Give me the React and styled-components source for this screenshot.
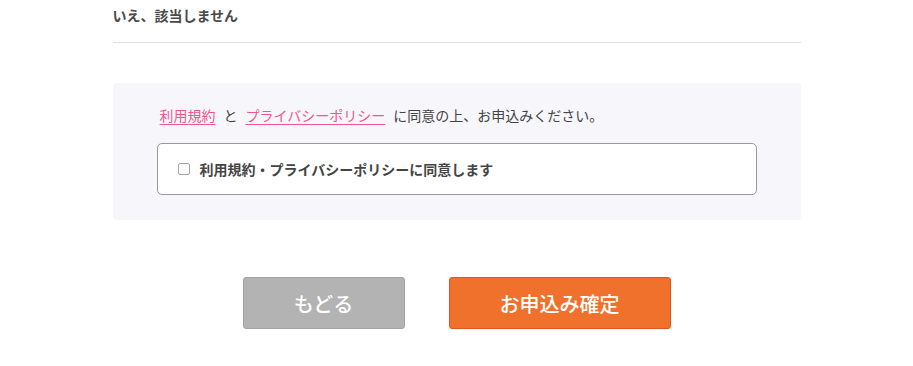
import React from 'react';
import styled, { createGlobalStyle } from 'styled-components';

const GlobalStyle = createGlobalStyle`
  body {
    margin: 0;
    background: #fff;
    font-family: "Noto Sans CJK JP", "Noto Sans", sans-serif;
    color: #444;
  }
`;

const Wrapper = styled.div`
  width: 688px;
  margin: 0 auto;
`;

const Answer = styled.div`
  font-size: 14px;
  font-weight: 700;
  line-height: 30px;
  color: #4a4a4a;
  padding-bottom: 12px;
  border-bottom: 1px solid #dedede;
`;

const AgreePanel = styled.section`
  margin-top: 40px;
  padding: 22px 44px 25px;
  background: #f7f7fb;
  border-radius: 4px;
`;

const Notice = styled.p`
  margin: 0 0 18px;
  padding-left: 3px;
  font-size: 14px;
  line-height: 20px;
  color: #444;
`;

const TextLink = styled.a`
  color: #f0568a;
  text-decoration: underline;
  text-underline-offset: 3px;
  margin: 0 8px;

  &:first-child {
    margin-left: 0;
  }
`;

const CheckRow = styled.label`
  display: flex;
  align-items: center;
  gap: 10px;
  height: 50px;
  padding: 0 20px;
  background: #fff;
  border: 1px solid #999;
  border-radius: 5px;
  font-size: 14px;
  font-weight: 700;
  color: #444;
`;

const Box = styled.span`
  width: 10px;
  height: 10px;
  border: 1px solid #a5a5a5;
  border-radius: 2px;
  background: #fff;
`;

const Actions = styled.div`
  display: flex;
  justify-content: center;
  gap: 44px;
  margin-top: 57px;
`;

const Button = styled.button`
  width: ${(p) => p.$width}px;
  height: 52px;
  border-radius: 3px;
  border: 1px solid ${(p) => (p.$primary ? '#e2541f' : '#a3a3a3')};
  background: ${(p) => (p.$primary ? '#f0712b' : '#b3b3b3')};
  color: #fff;
  font-family: inherit;
  font-size: 20px;
  font-weight: 500;
  cursor: pointer;
`;

export default function App() {
  return (
    <Wrapper>
      <GlobalStyle />
      <Answer>いえ、該当しません</Answer>
      <AgreePanel>
        <Notice>
          <TextLink href="#">利用規約</TextLink>と<TextLink href="#">プライバシーポリシー</TextLink>に同意の上、お申込みください。
        </Notice>
        <CheckRow>
          <Box />
          利用規約・プライバシーポリシーに同意します
        </CheckRow>
      </AgreePanel>
      <Actions>
        <Button $width={162}>もどる</Button>
        <Button $width={222} $primary>お申込み確定</Button>
      </Actions>
    </Wrapper>
  );
}
